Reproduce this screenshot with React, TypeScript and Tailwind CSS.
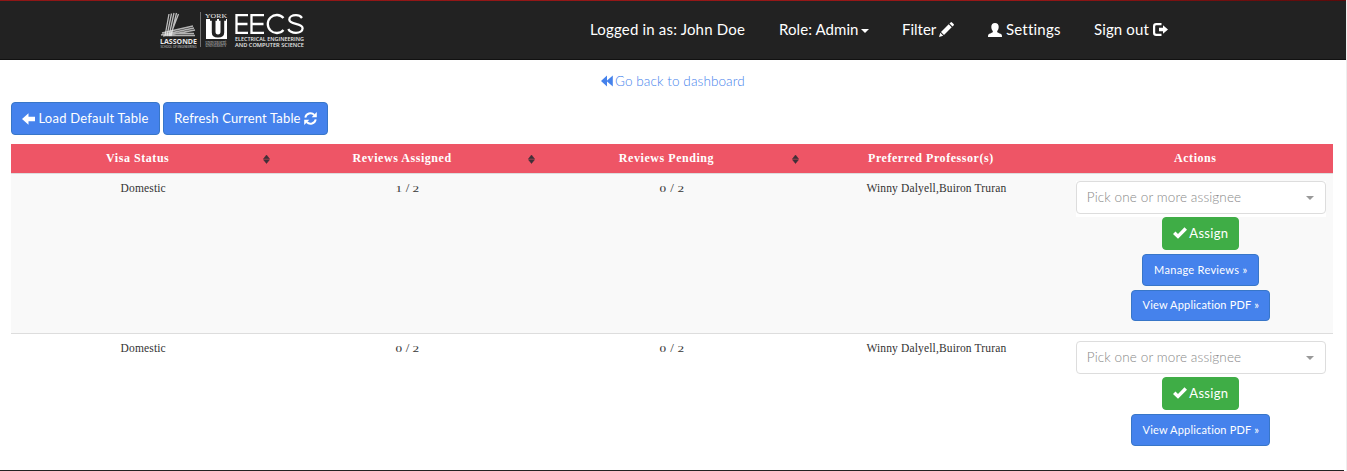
import type { ReactNode } from "react";

function ArrowLeft() {
  return (
    <svg width="13" height="12" viewBox="0 0 13 12" fill="currentColor" className="shrink-0">
      <path d="M0 6 6.500 .3V3.800H13v4.400H6.500v3.500z" />
    </svg>
  );
}

function Refresh() {
  return (
    <svg width="13" height="13" viewBox="0 0 13 13" className="shrink-0">
      <path d="M1.300 5.700A5.200 5.200 0 0 1 10.300 3M11.700 7.300A5.200 5.200 0 0 1 2.700 10" fill="none" stroke="currentColor" strokeWidth="1.900" />
      <path d="M12.800 0V5.200H7.700zM.2 13V7.800H5.300z" fill="currentColor" />
    </svg>
  );
}

function Backward() {
  return (
    <svg width="12" height="12" viewBox="0 0 12 12" fill="currentColor" className="shrink-0">
      <path d="M0 6 6 .4V11.600zM5.500 6 11.800 .4V11.600z" />
    </svg>
  );
}

function Pencil() {
  return (
    <svg width="15" height="15" viewBox="0 0 15 15" fill="currentColor" className="shrink-0">
      <path d="M0 15 1.300 10.800 4.200 13.700zM2 10 9.700 2.300l3 3L5 13zM10.500 1.500 11.600 .4q.7-.7 1.400 0l1.600 1.600q.7.7 0 1.400L13.500 4.500z" />
    </svg>
  );
}

function Person() {
  return (
    <svg width="14" height="14" viewBox="0 0 14 14" fill="currentColor" className="shrink-0">
      <path d="M7 0C9.400 0 10.700 1.500 10.700 3.700c0 1.700-.6 3.300-1.500 4.200v1.200c0 .6 3.600 1.600 4.300 2.400.4.500.5 1.500.5 2.500H0c0-1 .1-2 .5-2.500.7-.8 4.300-1.800 4.300-2.400V7.900C3.900 7 3.300 5.400 3.300 3.700 3.300 1.500 4.600 0 7 0z" />
    </svg>
  );
}

function LogOut() {
  return (
    <svg width="15" height="13" viewBox="0 0 15 13" className="shrink-0">
      <path d="M8.500 1.100H3.200Q1.100 1.100 1.100 3.200v6.600Q1.100 11.900 3.200 11.900h5.300" fill="none" stroke="currentColor" strokeWidth="2.200" />
      <path d="M10 2.200 15 6.500 10 10.800V8.300H6V4.700h4z" fill="currentColor" />
    </svg>
  );
}

function Check() {
  return (
    <svg width="14" height="12" viewBox="0 0 14 12" fill="currentColor" className="mb-px shrink-0">
      <path d="M0 7 2.500 4.500 5 6.900 11.500 .3 14 2.700 5 11.700z" />
    </svg>
  );
}

function Sorter() {
  return (
    <svg width="7" height="9" viewBox="0 0 7 9" fill="#3f3038" className="absolute right-[5px] top-[11px]">
      <path d="M3.500 0 6.500 3.800H.5zM3.500 8.500 6.500 4.700H.5z" stroke="#3f3038" strokeWidth=".5" />
    </svg>
  );
}

function Logo() {
  return (
    <svg width="146" height="38" viewBox="160 11 146 38" fill="#e8e8e8" className="shrink-0">
      <g stroke="#f0f0f0" fill="none">
        <path d="M169 14 165 36M171.500 13.500 167 36M174 13 169 36M176.500 13 171 36M178.500 14 170 36" strokeWidth="1.300" opacity=".75" />
        <path d="M162 33 193 26M161 35 194 28M163 36 195 30M165 35.500H195M170 33.500H194" strokeWidth="1.400" opacity=".7" />
      </g>
      <text x="160" y="44.300" fontSize="6.300" fontWeight="700" fontFamily="Open Sans, sans-serif" textLength="37" lengthAdjust="spacingAndGlyphs">LASSONDE</text>
      <text x="160.500" y="47.600" fontSize="2.800" fontFamily="Open Sans, sans-serif" textLength="36" lengthAdjust="spacingAndGlyphs" opacity=".8">SCHOOL OF ENGINEERING</text>
      <path d="M200 12h1v35h-1z" opacity=".4" />
      <text x="205" y="17.600" fontSize="6.800" fontFamily="Liberation Serif, serif" textLength="22" lengthAdjust="spacingAndGlyphs">YORK</text>
      <path d="M206 19h21v20h-21z" fill="#fff" />
      <path d="M210 19h7v1.800h-1.500v11q0 2.700 2.500 2.700t2.500-2.700V20.800H219V19h7v1.800h-1.800v11.700q0 5-6.200 5t-6.200-5V20.800H210z" fill="#222" />
      <text x="205.500" y="43.700" fontSize="3.200" fontFamily="Liberation Serif, serif" textLength="21" lengthAdjust="spacingAndGlyphs" opacity=".8">UNIVERSITÉ</text>
      <text x="205.500" y="46.900" fontSize="3.200" fontFamily="Liberation Serif, serif" textLength="21" lengthAdjust="spacingAndGlyphs" opacity=".8">UNIVERSITY</text>
      <g fill="none" stroke="#fff" strokeWidth="2.300">
        <path d="M248 15.200H236.500V32.800h11.500M236.500 24h11M264 15.200H251.500V32.800h12.500M251.500 24h12" />
        <path d="M283.500 18A9 9 0 1 0 283.500 30" />
        <path d="M302 18Q300 15.200 296 15.200C292 15.200 289.300 17 289.300 19.600 289.300 25.300 302.600 22.500 302.600 28.300 302.600 31.200 299.500 32.800 296 32.800 292 32.800 289.500 31.500 288.300 29" />
      </g>
      <text x="235" y="41" fontSize="5" fontFamily="Open Sans, sans-serif" fontWeight="600" textLength="69" lengthAdjust="spacingAndGlyphs">ELECTRICAL ENGINEERING</text>
      <text x="235" y="46.800" fontSize="5" fontFamily="Open Sans, sans-serif" fontWeight="600" textLength="69" lengthAdjust="spacingAndGlyphs">AND COMPUTER SCIENCE</text>
    </svg>
  );
}

function Button({ className, children }: { className: string; children: ReactNode }) {
  return (
    <button className={`flex shrink-0 items-center justify-center whitespace-nowrap rounded-[4px] border text-white ${className}`}>
      {children}
    </button>
  );
}

const BLUE = "border-[#3876c8] bg-[#4582ec]";

function Assignee() {
  return (
    <div className="h-9 w-[250px] shrink-0 bg-white">
      <div className="flex h-[33px] w-full items-center justify-between rounded border border-[#ddd] bg-white pl-[10px] pr-[11px]">
        <span className="whitespace-nowrap text-[13.500px] font-light tracking-[0.120px] text-[#888]">Pick one or more assignee</span>
        <span className="h-0 w-0 border-x-[4px] border-t-[4px] border-x-transparent border-t-[#999]" />
      </div>
    </div>
  );
}

type Row = { visa: string; assigned: string; pending: string; professors: string; manage: boolean };

const rows: Row[] = [
  { visa: "Domestic", assigned: "1 / 2", pending: "0 / 2", professors: "Winny Dalyell,Buiron Truran", manage: true },
  { visa: "Domestic", assigned: "0 / 2", pending: "0 / 2", professors: "Winny Dalyell,Buiron Truran", manage: false },
];

function Count({ value }: { value: string }) {
  const [a, b] = value.split(" / ");
  return (
    <span className="inline-flex items-baseline gap-[4px]">
      <span className="inline-block origin-[50%_78%] scale-x-[1.150] scale-y-[.8]">{a}</span>
      <span className="text-[13px]">/</span>
      <span className="inline-block origin-[50%_78%] scale-x-[1.150] scale-y-[.8]">{b}</span>
    </span>
  );
}

export default function App() {
  return (
    <div className="flex h-[471px] w-full flex-col overflow-hidden border-r border-[#eee] bg-white font-['Lato',sans-serif] text-[13px] text-[#333]">
      <nav className="flex h-[60px] shrink-0 items-center border-b border-[#111] bg-[#222] bg-[linear-gradient(90deg,#8f1616,#981818_75%,#5c0a0a)] bg-[length:100%_1px] bg-no-repeat pl-[160px] text-[15px] text-white">
        <Logo />
        <div className="ml-[284px] flex items-center whitespace-nowrap">
          <span className="w-[189px] tracking-[0.180px]">Logged in as: John Doe</span>
          <span className="flex w-[123px] items-center gap-[2px]">
            <span className="w-[80px] tracking-[0.080px]">Role: Admin</span>
            <span className="mt-[3px] h-0 w-0 border-x-[4px] border-t-[4px] border-x-transparent border-t-white" />
          </span>
          <span className="flex w-[86px] items-center">
            <span className="w-[37px]">Filter</span>
            <Pencil />
          </span>
          <span className="flex w-[106px] items-center gap-[4px]">
            <Person />
            <span className="tracking-[0.200px]">Settings</span>
          </span>
          <span className="flex items-center">
            <span className="w-[59px] tracking-[0.120px]">Sign out</span>
            <LogOut />
          </span>
        </div>
      </nav>

      <div className="flex h-[42px] shrink-0 items-center pl-[601px] text-[#4582ec]">
        <a className="flex items-center gap-[2px]">
          <Backward />
          <span className="whitespace-nowrap text-[13.500px] font-light tracking-[0.100px]">Go back to dashboard</span>
        </a>
      </div>

      <div className="flex h-[42px] shrink-0 gap-[3px] pl-[11px]">
        <Button className={`${BLUE} h-[33px] w-[149px] gap-[3px]`}>
          <ArrowLeft />
          <span className="tracking-[0.230px]">Load Default Table</span>
        </Button>
        <Button className={`${BLUE} h-[33px] w-[165px] gap-[3px]`}>
          <span className="tracking-[0.150px]">Refresh Current Table</span>
          <Refresh />
        </Button>
      </div>

      <div className="ml-[11px] w-[1322px] shrink-0 font-['Liberation_Serif',serif] text-[11.500px]">
        <div className="grid h-[30px] grid-cols-5 border-b border-[#ddd] bg-[#ee5566] text-[12px] font-bold text-white">
          {["Visa Status", "Reviews Assigned", "Reviews Pending", "Preferred Professor(s)", "Actions"].map((h, i) => (
            <div key={h} className="relative pr-[11px] pt-[5px] text-center leading-[18px] tracking-[0.550px]">
              {h}
              {i < 3 && <Sorter />}
            </div>
          ))}
        </div>
        {rows.map((row, i) => (
          <div key={i} className={`grid grid-cols-5 text-center ${row.manage ? "h-[160px] border-b border-[#ddd] bg-[#f9f9f9]" : "h-[136px] bg-white"}`}>
            <div className="pt-[5px] leading-[18px] tracking-[0.150px]">{row.visa}</div>
            <div className="pt-[5px] leading-[18px]"><Count value={row.assigned} /></div>
            <div className="pt-[5px] leading-[18px]"><Count value={row.pending} /></div>
            <div className="whitespace-nowrap pt-[5px] leading-[18px] tracking-[0.150px]">{row.professors}</div>
            <div className="flex flex-col items-center pt-[7px] font-['Lato',sans-serif]">
              <Assignee />
              <Button className="h-[33px] w-[77px] gap-[2px] border-[#3fad46] bg-[#3fad46] text-[13px]">
                <Check />
                <span className="tracking-[0.300px]">Assign</span>
              </Button>
              {row.manage && <Button className={`${BLUE} mt-1 h-8 w-[117px] text-[11px] tracking-[0.300px]`}>Manage Reviews »</Button>}
              <Button className={`${BLUE} mt-1 w-[139px] text-[11px] tracking-[0.180px] ${row.manage ? "h-[31px]" : "h-8"}`}>View Application PDF »</Button>
            </div>
          </div>
        ))}
      </div>
      <div className="mr-[2px] h-px shrink-0 bg-[#222]" />
    </div>
  );
}
